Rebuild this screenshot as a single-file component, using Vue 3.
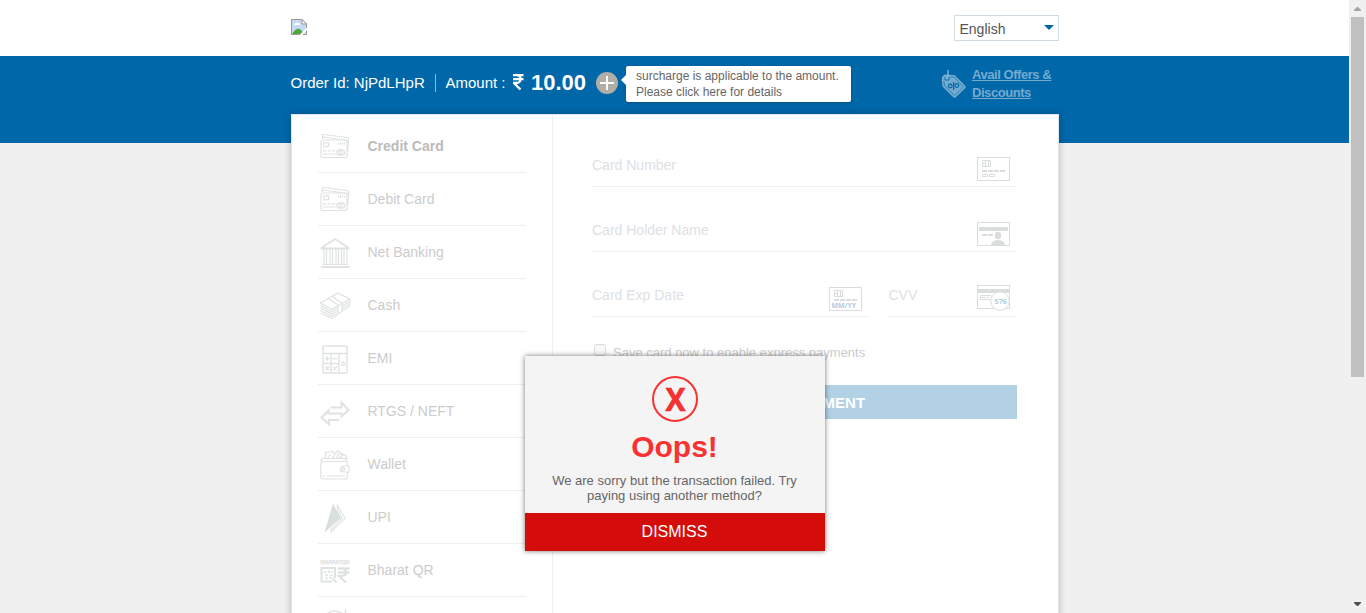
<script setup>
const methods = [
  { label: 'Credit Card', icon: 'card', active: true },
  { label: 'Debit Card', icon: 'card' },
  { label: 'Net Banking', icon: 'bank' },
  { label: 'Cash', icon: 'cash' },
  { label: 'EMI', icon: 'emi' },
  { label: 'RTGS / NEFT', icon: 'transfer' },
  { label: 'Wallet', icon: 'wallet' },
  { label: 'UPI', icon: 'upi' },
  { label: 'Bharat QR', icon: 'qr' },
  { label: '', icon: 'more' },
]
</script>

<template>
  <div class="window">
    <div class="page">
      <header class="top">
        <svg class="broken" width="16" height="16" viewBox="0 0 16 16">
          <path d="M.5 .5H11L15.500 5V15.500H.5z" fill="#c6d8f6" stroke="#999" />
          <path d="M3 6q0-2 2-2 1-1.500 2 0 2 0 2 2z" fill="#fff" />
          <path d="M1 15q5-8 9-4l3 4z" fill="#4ea83a" />
          <path d="M11 .5V5H15.500z" fill="#fff" stroke="#999" />
          <path d="M8.500 16L16 8.500V11L11.500 16z" fill="#fff" />
        </svg>
        <div class="select">
          <span>English</span>
          <svg width="10" height="5" viewBox="0 0 10 5"><path d="M0 0H10L5 5z" fill="#0067a9" /></svg>
        </div>
      </header>

      <section class="band">
        <span class="order">Order Id: NjPdLHpR</span>
        <span class="rule"></span>
        <span class="amount-label">Amount :</span>
        <svg class="rupee" width="11" height="16" viewBox="0 0 11 16">
          <path d="M0 1.200H10.500M0 5.200H10.500M.5 1.200H3.500Q7.500 1.200 7.500 5Q7.500 9 3 9H1L7.500 15.500" fill="none" stroke="#fff" stroke-width="2.300" />
        </svg>
        <span class="amount">10.00</span>
        <svg class="plus" width="22" height="22" viewBox="0 0 22 22">
          <circle cx="11" cy="11" r="11" fill="#b0aea6" />
          <path d="M4 11H18M11 4V18" stroke="#fff" stroke-width="2" />
        </svg>
        <div class="tip">surcharge is applicable to the amount.<br />Please click here for details</div>
        <div class="offers">
          <svg width="26" height="30" viewBox="0 0 26 30">
            <path d="M1 8L3.500 5.500 13.500 6 24 16.500Q25.500 18 24 19.500L15 28Q13.500 29.500 12 28L1.500 17.500Q.3 12 1 8z" fill="#73abd0" />
            <path d="M2.800 12L3.500 16.500 13.500 26.500 22.500 18 13 8H9" fill="none" stroke="#0067a9" stroke-width=".6" />
            <path d="M7 1V8.500Q6.500 11 4.500 10V8" fill="none" stroke="#8cbbd9" stroke-width="1.300" />
            <path d="M4 8V11H8V8" fill="none" stroke="#0067a9" stroke-width=".9" />
            <circle cx="9.300" cy="17" r="1.800" fill="none" stroke="#0067a9" stroke-width="1.200" />
            <circle cx="15.900" cy="16.500" r="1.800" fill="none" stroke="#0067a9" stroke-width="1.200" />
            <path d="M12.600 13V21" stroke="#0067a9" stroke-width="1.200" />
          </svg>
          <span>Avail Offers &amp;<br />Discounts</span>
        </div>
      </section>

      <main class="panel">
        <nav class="methods">
          <div v-for="m in methods" :key="m.label" class="method" :class="{ active: m.active }">
            <svg class="icon" width="32" height="32" viewBox="0 0 32 32" fill="none" stroke="#dfe2e3" stroke-width="1.200">
              <g v-if="m.icon === 'card'">
                <path d="M3.500 9V6Q3.500 4 5 4.500L28 7.500Q30 8 29.800 9L28.500 22" />
                <path d="M4 7L29 10.500" />
                <rect x="2" y="10" width="26" height="17.500" rx="2" />
                <rect x="4.800" y="12.700" width="4.700" height="4" />
                <path d="M19.500 12.500V14.500M21.500 12.500V14.500M23.500 12.500V14.500M25.500 12.500V14.500M4 20.800H7M8.500 20.800H11.500M13 20.800H16M4 24H16.500" />
                <circle cx="20.500" cy="22.500" r="2.700" /><circle cx="23" cy="22.500" r="2.700" />
              </g>
              <g v-else-if="m.icon === 'bank'">
                <path d="M2.500 12.500V12L16 3 29.500 12V12.500z" stroke-width="1.800" />
                <path d="M5 13V28.500M7.500 13V28.500M11 13V28.500M13.500 13V28.500M17 13V28.500M19.500 13V28.500M22.500 13V28.500M25 13V28.500M28 13V28.500" />
                <path d="M3.500 28.500H29" stroke-width="1" /><path d="M2 31H30.500" stroke-width="2" />
              </g>
              <g v-else-if="m.icon === 'cash'">
                <path d="M1.500 14L19 4 30.500 10 12.500 20.500z" stroke-width="1.400" />
                <path d="M1.500 16.500L12.500 23 18 19.500M23 17L30.500 12.500M1.500 19L12.500 25 18 22M23 19.500L30.500 15M1.500 21.500L12.500 27.500 18 24.500M23 22L30.500 17.500M1.500 24L12.500 29.500 18 26.500M30.500 10V18" stroke-width="1.100" />
                <path d="M9.500 9.500L19 16V25L23 22.500V14L13 7.500" />
              </g>
              <g v-else-if="m.icon === 'emi'" stroke-width="1.400">
                <rect x="4" y="4" width="24" height="27" rx="1" />
                <path d="M4 11.500H28M12 11.500V31M20 11.500V31M4 21.500H20M6 16.500H10.500M8.200 14.200V18.800M13.800 16.500H18.200M22 20.500H26.500M22 23H26.500M6.500 24.500L10.300 28.300M10.300 24.500L6.500 28.300M14 28.500L18 24.500" />
                <path d="M14 24.500L15.500 26M16.800 27.300L18 28.500" stroke-width="1" />
              </g>
              <g v-else-if="m.icon === 'transfer'" stroke-width="2">
                <path d="M11.500 12.500H22.500V7.500L29.500 15 22.500 21.500V18.500H9.500V15.500L2.500 22.500 10 29.500V25H20.500" />
              </g>
              <g v-else-if="m.icon === 'wallet'">
                <rect x="1.800" y="13.500" width="26.500" height="17.500" rx="2" />
                <path d="M4 13.500Q0 12 4 10.500H28V13.500M3 28H6M8 28H26M6 11L6.500 4.500 14 3.500 15 6M9 11Q8.500 8 12 6.500M13 11L18.500 2.500 27.500 8.500 26 12M16.500 11L20 5.500 24.500 8M19.500 10.500Q20.500 7.500 23 9.500" />
                <path d="M30 18H24.500Q21.500 18 21.500 21Q21.500 24 24.500 24H30z" fill="#fff" />
                <circle cx="24.500" cy="21" r="1.300" />
              </g>
              <g v-else-if="m.icon === 'upi'">
                <path d="M14 2.500L22 17 5.500 31.500z" fill="#dadede" stroke="none" />
                <path d="M18 3.500L26 17.500 12 31 11.500 28.500M18 3.500L18.500 8L23 17.500 12 28.500" stroke-width="1.100" />
              </g>
              <g v-else-if="m.icon === 'qr'">
                <text class="qr-text" x="1.500" y="10" textLength="29" lengthAdjust="spacingAndGlyphs">BHARATQR</text>
                <path d="M16 24V14H2.500V27.500H13" stroke-width="2" />
                <path d="M5 18H8M10 16.500V19M12 18H14M6 21H9M11 21.500H14M7.500 23V25.500M11 23V25" stroke-width="1.700" />
                <path d="M13 24L17.500 28.500" stroke-width="2.300" />
                <path d="M19 14.500H30.500M19 18.500H30.500M19 14.500H23Q27 14.500 27 18.500Q27 22 21 22H20L27 28.500" stroke-width="2.300" />
              </g>
              <g v-else>
                <path d="M6.500 8Q15 .5 24 7M26.500 2.500V8.500H21" stroke-width="1.600" />
              </g>
            </svg>
            <span>{{ m.label }}</span>
          </div>
        </nav>

        <div class="form">
          <div class="field">
            <span>Card Number</span>
            <svg width="33" height="24" viewBox="0 0 33 24" fill="none" stroke="#dadddd">
              <rect x=".5" y=".5" width="32" height="23" />
              <path d="M5.500 3.500H13.500V9.500H5.500zM5.500 6.500H8.500M8.500 3.500V9.500M11.500 3.500V9.500M5.500 17.500H10.500V19.500H5.500zM12.500 17.500H17.500V19.500H12.500z" />
              <path d="M5 14H10M11 14H16M17 14H22M23 14H28" stroke-width="2" />
            </svg>
          </div>
          <div class="field">
            <span>Card Holder Name</span>
            <svg width="33" height="24" viewBox="0 0 33 24" fill="none" stroke="#dadddd">
              <rect x=".5" y=".5" width="32" height="23" />
              <path d="M2 7H31" stroke-width="4" />
              <path d="M5 13H10M11 13H16" stroke-width="2" />
              <path d="M14 23Q15 18 21 18T28 23z" fill="#dadddd" stroke="none" />
              <ellipse cx="21" cy="13.500" rx="3.200" ry="3.700" fill="#dadddd" stroke="none" />
            </svg>
          </div>
          <div class="pair">
            <div class="field expiry">
              <span>Card Exp Date</span>
              <svg width="33" height="24" viewBox="0 0 33 24" fill="none" stroke="#dadddd">
                <rect x=".5" y=".5" width="32" height="23" />
                <path d="M5.500 3.500H13.500V9.500H5.500zM5.500 6.500H8.500M8.500 3.500V9.500M11.500 3.500V9.500" />
                <path d="M5 13H10M11 13H16M17 13H22M23 13H28" stroke-width="2" />
                <text class="hint" x="2.500" y="21.300" textLength="24.500" lengthAdjust="spacingAndGlyphs">MM/YY</text>
              </svg>
            </div>
            <div class="field cvv">
              <span>CVV</span>
              <svg width="33" height="26" viewBox="0 0 33 26" fill="none" stroke="#dadddd">
                <rect x=".5" y=".5" width="32" height="23" />
                <path d="M1 6H32" stroke-width="4" />
                <path d="M14 10.500H3.500V14.500H13M5 12.500H9M10 12.500H12" />
                <circle cx="23" cy="16" r="9.300" fill="#fff" />
                <text class="hint" x="17.500" y="18.700" textLength="12.500" lengthAdjust="spacingAndGlyphs">576</text>
              </svg>
            </div>
          </div>
          <div class="save"><i></i><span>Save card now to enable express payments</span></div>
          <div class="pay">MAKE PAYMENT</div>
        </div>
      </main>

      <div class="modal">
        <svg width="46" height="46" viewBox="0 0 46 46">
          <circle cx="23" cy="23" r="22" fill="none" stroke="#f93131" stroke-width="2" />
          <text class="cross" x="13.500" y="34.500" textLength="20" lengthAdjust="spacingAndGlyphs">X</text>
        </svg>
        <h1>Oops!</h1>
        <p>We are sorry but the transaction failed. Try<br />paying using another method?</p>
        <button>DISMISS</button>
      </div>
    </div>

    <aside class="scroll">
      <svg width="7" height="4" viewBox="0 0 7 4"><path d="M0 4V3L3 0H4L7 3V4z" fill="#a3a3a3" /></svg>
      <div class="thumb"></div>
      <svg class="down" width="7" height="4" viewBox="0 0 7 4"><path d="M0 0H7V1L4 4H3L0 1z" fill="#505050" /></svg>
    </aside>
  </div>
</template>

<style>
body { overflow: hidden; }
</style>

<style scoped>
.window { display: flex; width: 1366px; height: 613px; overflow: hidden; font-family: "Liberation Sans", Arial, sans-serif; background: #f0f0f0; }
.window * { box-sizing: border-box; }
svg { display: block; flex: none; }
.page { position: relative; width: 1349px; height: 613px; overflow: hidden; }
.top { display: flex; justify-content: space-between; height: 56px; padding: 0 290px 0 291px; background: #fff; }
.broken { margin-top: 19px; }
.select { display: flex; align-items: center; justify-content: space-between; width: 105px; height: 26px; margin-top: 15px; padding: 2px 4px 0 4.500px; border: 1px solid #cfdbe0; color: #555; font-size: 14px; }
.select svg { margin-top: -3px; }
.band { display: flex; height: 87px; padding: 0 0 0 290.500px; background: #0067a9; color: #fff; font-size: 15px; line-height: 18px; white-space: nowrap; }
.order { width: 144.500px; padding-top: 18px; }
.rule { width: 1px; height: 18px; margin-top: 18px; background: #8cbbd9; }
.amount-label { width: 77px; padding: 18px 0 0 9.500px; }
.rupee { margin-top: 18px; }
.amount { width: 72px; padding: 15px 0 0 7px; font-size: 22px; font-weight: bold; line-height: 24px; }
.plus { margin-top: 16px; }
.tip { position: relative; width: 225px; height: 36px; margin: 10px 0 0 8px; padding: 2px 0 0 10px; background: #fff; border-radius: 2px; box-shadow: 0 1px 3px rgba(0,0,0,.25); color: #666; font-size: 12px; line-height: 16px; }
.tip::before { content: ""; position: absolute; left: -5px; top: 9px; border: solid transparent; border-width: 5px 5px 5px 0; border-right-color: #fff; }
.offers { display: flex; margin: 13px 0 0 90px; gap: 5px; color: #73abd0; font-size: 13px; font-weight: bold; line-height: 18px; text-decoration: underline; letter-spacing: -.45px; }
.offers span { margin-top: -3px; }
.panel { position: relative; display: flex; width: 768px; height: 520px; margin: -29px 0 0 291px; background: #fff; border: 1px solid #e4e6e7; box-shadow: 0 0 7px rgba(0,0,0,.25); }
.methods { width: 261px; padding: 5px 26px 0 26px; border-right: 1px solid #edf0f0; }
.method { display: flex; height: 53px; align-items: center; gap: 16.500px; border-bottom: 1px solid #edf0f0; color: #ccc; font-size: 14px; }
.method.active { color: #bbb; font-weight: bold; }
.method .icon { margin-left: 1px; }
.qr-text { font-size: 5px; font-weight: bold; fill: #dfe2e3; stroke: #dfe2e3; stroke-width: .25px; }
.form { width: 424px; margin-left: 39px; padding-top: 7px; }
.field { display: flex; justify-content: space-between; height: 65px; border-bottom: 1px solid #f0f1f2; color: #dde1e5; font-size: 14px; }
.field span { margin-top: 35px; line-height: 16px; }
.field svg { margin: 35px 6px 0 0; }
.pair { display: flex; justify-content: space-between; }
.expiry { width: 276px; }
.cvv { width: 127.500px; }
.cvv svg { margin-top: 33px; }
.hint { font-family: "Open Sans", sans-serif; font-size: 7px; font-weight: bold; fill: #b3cbe3; stroke: none; }
.save { display: flex; align-items: center; gap: 7px; height: 14px; margin: 28px 0 0 2px; color: #ccc; font-size: 13px; }
.save i { width: 12px; height: 12px; border: 1px solid #ddd; border-radius: 2px; background: #f8f8f8; margin-bottom: 4px; }
.pay { width: 425px; height: 34px; margin: 26px 0 0; background: #b2d1e5; color: #fff; font-size: 15px; font-weight: bold; line-height: 36px; text-align: center; text-indent: 2px; }
.modal { position: absolute; left: 525px; top: 356px; display: flex; flex-direction: column; align-items: center; width: 300px; height: 195px; padding-top: 20px; background: #f4f4f4; box-shadow: 0 0 5px rgba(0,0,0,.55); }
.cross { fill: #f93131; stroke: #e32525; stroke-width: .6px; font: bold 32px "Open Sans", sans-serif; }
h1 { margin: 6px 1px 0 0; color: #f93131; font-size: 30px; line-height: 37px; }
p { margin: 8px 1px 0 0; color: #666; font-size: 13px; line-height: 15px; text-align: center; white-space: nowrap; }
button { width: 300px; height: 38px; margin-top: auto; padding: 0 1px 0 0; border: 0; background: #d40d0b; color: #fff; font: 16px "Liberation Sans", Arial, sans-serif; }
.scroll { display: flex; flex-direction: column; align-items: center; width: 17px; height: 613px; padding-top: 7px; background: #f0f0f0; }
.thumb { width: 13px; height: 360px; margin-top: 6px; background: #c0c0c0; }
.down { margin: auto 0 7px; }
</style>
